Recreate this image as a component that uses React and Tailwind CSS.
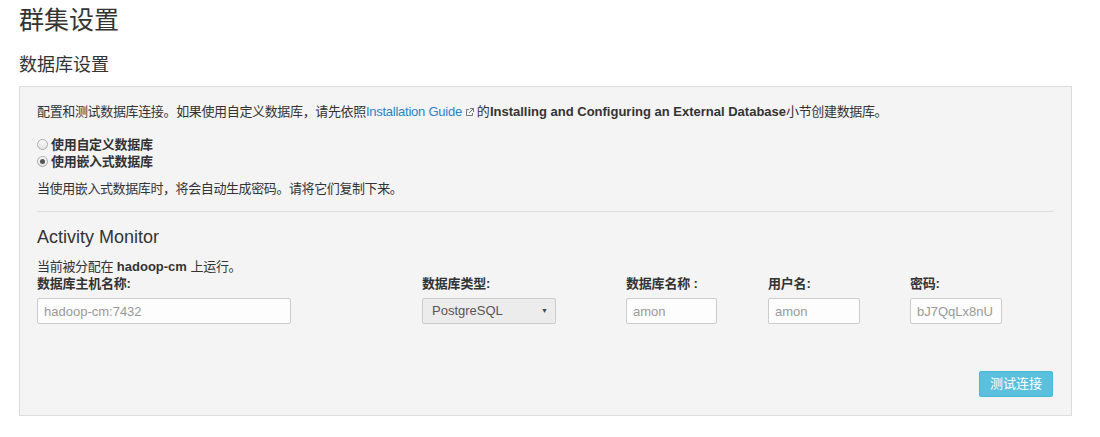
import React from "react";

const font = { fontFamily: '"Liberation Sans", "Noto Sans CJK SC", Arial, sans-serif' };

function ExtIcon() {
  return (
    <svg width="9" height="9" viewBox="0 0 9 9" className="inline-block mx-[3px] align-[-1px]" fill="none" stroke="#777" strokeWidth="1">
      <path d="M4 1.5H1.5v6h6V5" />
      <path d="M5 0.5h3.5V4" />
      <path d="M8.5 0.5L4 5" />
    </svg>
  );
}

function Radio({ checked, label }) {
  return (
    <div className="flex items-center h-[17px] font-bold text-[13px] text-[#333]">
      <span className="w-[11px] h-[11px] rounded-full border border-[#aaa] bg-gradient-to-b from-[#fafafa] to-[#e2e2e2] flex items-center justify-center mr-[3px]">
        {checked && <span className="w-[5px] h-[5px] rounded-full bg-[#555]" />}
      </span>
      <span className="tracking-[-0.3px]">{label}</span>
    </div>
  );
}

function Field({ label, children }) {
  return (
    <div className="flex flex-col">
      <div className="h-[17px] leading-[17px] font-bold text-[13px] text-[#333] tracking-[-0.2px]">{label}</div>
      <div className="mt-[6px]">{children}</div>
    </div>
  );
}

function TextInput({ w, placeholder }) {
  return (
    <input
      className={`${w} h-[26px] border border-[#ccc] rounded-[2px] bg-[#fdfdfd] px-[6px] text-[13px] text-[#555] placeholder:text-[#999] outline-none`}
      style={font}
      placeholder={placeholder}
    />
  );
}

export default function App() {
  return (
    <div className="bg-white w-[1100px] h-[437px] pl-[19px] text-[#333]" style={font}>
      <h1 className="pt-[4px] text-[25px] leading-[32px] font-normal text-[#333]">群集设置</h1>
      <h2 className="mt-[16px] text-[18px] leading-[26px] font-normal text-[#333]">数据库设置</h2>
      <div className="mt-[8px] w-[1053px] border border-[#ddd] bg-[#f4f4f4] px-[17px] pt-[16px] pb-[18px]">
        <p className="text-[13px] leading-[18px] text-[#333]">
          <span className="tracking-[-0.35px]">配置和测试数据库连接。如果使用自定义数据库，请先依照</span>
          <span className="text-[#2b83c5] tracking-[-0.25px]">Installation Guide</span>
          <ExtIcon />的<b>Installing and Configuring an External Database</b>
          <span className="tracking-[-0.35px]">小节创建数据库。</span>
        </p>
        <div className="mt-[15px]">
          <Radio label="使用自定义数据库" />
          <Radio checked label="使用嵌入式数据库" />
        </div>
        <p className="mt-[10px] text-[13px] leading-[18px] tracking-[-0.4px]">当使用嵌入式数据库时，将会自动生成密码。请将它们复制下来。</p>
        <div className="mt-[13px] h-px bg-[#ddd]" />
        <h3 className="mt-[13px] text-[18px] leading-[24px] font-normal">Activity Monitor</h3>
        <p className="mt-[9px] text-[13px] leading-[17px]">
          <span className="tracking-[-0.3px]">当前被分配在</span> <b>hadoop-cm</b> <span className="tracking-[-0.3px]">上运行。</span>
        </p>
        <div className="grid grid-cols-[385px_204px_142px_142px_auto]">
          <Field label="数据库主机名称:">
            <TextInput w="w-[254px]" placeholder="hadoop-cm:7432" />
          </Field>
          <Field label="数据库类型:">
            <div className="w-[134px] h-[26px] border border-[#ccc] rounded-[2px] bg-[#ececec] flex items-center justify-between pl-[9px] pr-[7px] text-[13px] text-[#555]">
              <span>PostgreSQL</span>
              <span className="text-[7px] text-[#444]">▼</span>
            </div>
          </Field>
          <Field label="数据库名称 :">
            <TextInput w="w-[91px]" placeholder="amon" />
          </Field>
          <Field label="用户名:">
            <TextInput w="w-[92px]" placeholder="amon" />
          </Field>
          <Field label="密码:">
            <TextInput w="w-[92px]" placeholder="bJ7QqLx8nU" />
          </Field>
        </div>
        <div className="mt-[47px] flex justify-end pr-[1px]">
          <button className="w-[74px] h-[26px] bg-[#5bc0de] border border-[#46b8da] rounded-[2px] text-white text-[13px]" style={font}>
            测试连接
          </button>
        </div>
      </div>
    </div>
  );
}
